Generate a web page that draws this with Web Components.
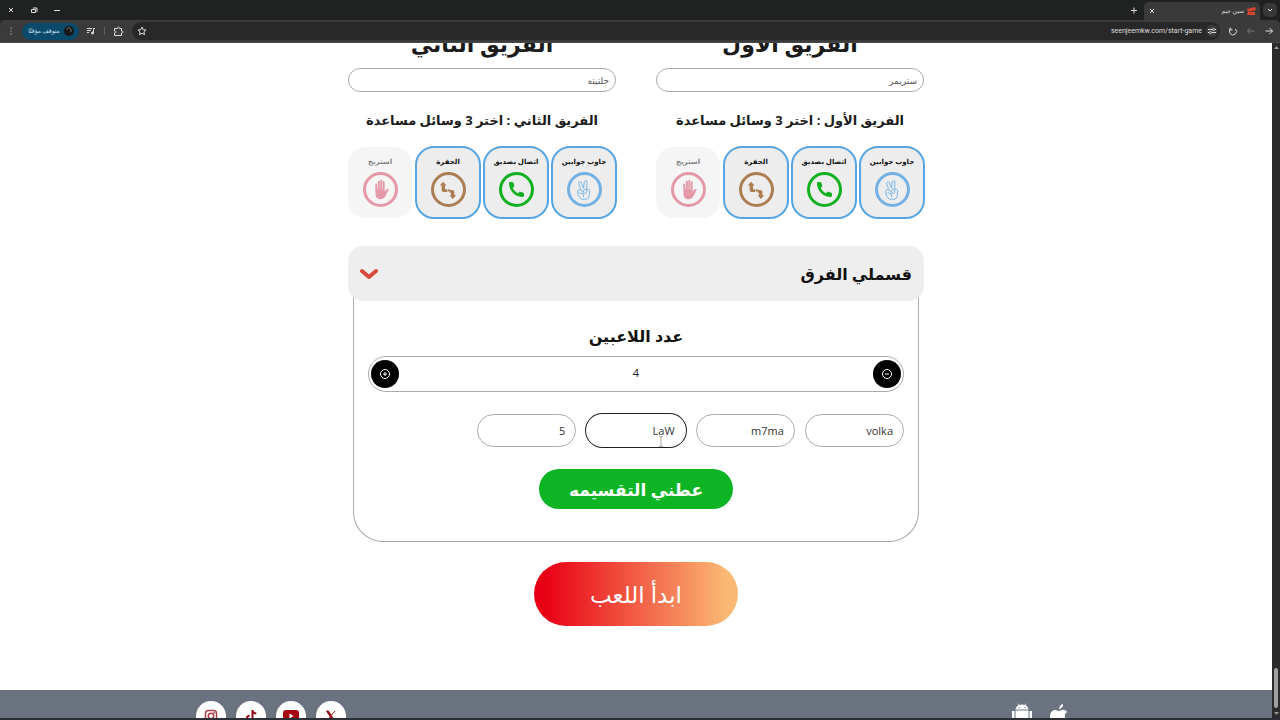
<!DOCTYPE html>
<html lang="ar">
<head>
<meta charset="utf-8">
<meta name="viewport" content="width=device-width, initial-scale=1">
<title>سين جيم</title>
<style>
    body {
        margin: 0;
        height: 100vh;
        overflow: hidden;
        display: flex;
        flex-direction: column;
        background: #fff;
        color: #1b1b1b;
        font-family: "Open Sans", "DejaVu Sans", sans-serif;
    }

    .viewport {
        flex: 1;
        min-height: 0;
        display: flex;
    }

    .page {
        flex: 1;
        overflow: hidden;
    }

    main {
        max-width: 576px;
        height: 665px;
        margin: -18px auto 0;
    }

    .teams {
        display: grid;
        grid-template-columns: 1fr 1fr;
        gap: 40px;
        margin-bottom: 28px;
    }
</style>
</head>
<body>
    <browser-bar></browser-bar>
    <div class="viewport">
        <div class="page" dir="rtl">
            <main>
                <div class="teams">
                    <team-form name="الفريق الأول" value="ستريمر"></team-form>
                    <team-form name="الفريق الثاني" value="حلتيته"></team-form>
                </div>
                <team-splitter heading="قسملي الفرق">
                    <player-count value="4"></player-count>
                    <player-names names="volka,m7ma,LaW,5" active="2"></player-names>
                    <pill-button kind="split">عطني التقسيمه</pill-button>
                </team-splitter>
                <pill-button kind="start">ابدأ اللعب</pill-button>
            </main>
            <site-footer></site-footer>
        </div>
        <scroll-track></scroll-track>
    </div>
    <task-edge></task-edge>
    <text-cursor></text-cursor>

<script>
const reset = `
    * {
        margin: 0;
        padding: 0;
        box-sizing: border-box;
    }

    button, input {
        font: inherit;
        color: inherit;
        border: 0;
        background: none;
    }

    svg {
        display: block;
        flex: none;
    }
`;

const icons = {
    peace: `
        <svg width="22" height="22" viewBox="0 0 24 24" fill="none" stroke="#6fb0e6" stroke-linecap="round" stroke-linejoin="round">
            <path d="M8.5 11.5 6.2 4.8c-.5-1.8 2-2.7 2.8-.9l2.6 6.3.7-7.1c.3-2 3-1.7 3 .2l-.4 8.2"/>
            <path d="M14.9 11.5c1.3-1 3.1-.3 3.2 1.3.3 4-.6 7.7-2.6 9.2H9.2c-2.3-1.7-3.6-4-3.7-6.5"/>
            <path d="M5.5 15.6c-1.6-2.8.5-4.8 2.4-3.7l3.3 1.8c1.4.9.3 2.8-1.2 2.2l-2.3-1M10.5 16.2c1 .3 1.4 1.6 1 3M11.4 13.7c0-2.4 2.8-3.2 3.5-1.4v2.3c-.3 1.4-2.1 1.5-2.8.5"/>
        </svg>`,
    phone: `
        <svg width="19" height="19" viewBox="0 0 24 24" fill="#10b020">
            <path d="M7.2 10.2c1.300 2.800 3.800 5.300 6.600 6.600l1.700-1.700c.4-.4.9-.5 1.400-.3l3.600 1.200c.6.200 1 .7 1 1.300V20c0 .8-.6 1.500-1.500 1.500C10.500 21.500 2.500 13.500 2.500 4c0-.9.7-1.500 1.500-1.500h2.700c.6 0 1.100.4 1.300 1l1.200 3.600c.2.500 0 1-.3 1.400z"/>
        </svg>`,
    swap: `
        <svg width="18" height="18" viewBox="0 0 24 24" fill="#ab7d51">
            <path d="M5.500 1 10 6H8v5h3v3.500H6.500c-2 0-3-1-3-3V6H1z"/>
            <path d="M18.500 24 14 19h2v-3.500h-2V12h3.500c2 0 3 1 3 3v4h2.500z"/>
            <circle cx="13" cy="12.500" r="1.500"/>
        </svg>`,
    hand: `
        <svg width="21" height="21" viewBox="0 0 24 24" fill="#d14460">
            <path d="M6 6c0-1.300 1.900-1.300 2 0l.5 6h.5V3.200c0-1.500 2.200-1.500 2.200 0V12h.6V1.900c0-1.500 2.200-1.500 2.200 0V12h.6V3.700c0-1.500 2.100-1.500 2.100 0v10.800c1-1.700 2.200-3 3.700-3.100 1 0 1.300.8.7 1.500-1.300 1.600-2 4.400-3.500 6.700C16 22 14.400 23 12 23c-4 0-5.500-2.600-5.700-6z"/>
        </svg>`,
    plus: `
        <svg width="12" height="12" viewBox="0 0 12 12" fill="none" stroke="#fff">
            <circle cx="6" cy="6" r="4.500"/><path d="M4 6h4M6 4v4"/>
        </svg>`,
    minus: `
        <svg width="12" height="12" viewBox="0 0 12 12" fill="none" stroke="#fff">
            <circle cx="6" cy="6" r="4.500"/><path d="M4 6h4"/>
        </svg>`
};

class BrowserBar extends HTMLElement {
    constructor() {
        super();
        this.shadowDOM = this.attachShadow({ mode: "open" });
    }

    connectedCallback() {
        this.shadowDOM.innerHTML = `
            <style>
                ${reset}
                :host {
                    display: block;
                    background: #202221;
                    color: #dedede;
                    font-size: 7px;
                    line-height: 12px;
                    border-bottom: 1px solid #4a4a4a;
                }

                svg {
                    fill: none;
                    stroke: currentColor;
                    stroke-width: 1;
                }

                .strip, .tools {
                    display: flex;
                    align-items: center;
                }

                .strip {
                    height: 20px;
                    padding: 0 3px 0 6px;
                }

                .windows {
                    display: flex;
                    gap: 13px;
                    flex: 1;
                }

                .tab {
                    display: flex;
                    align-items: center;
                    width: 116px;
                    height: 18px;
                    margin: 2px 3px 0 5px;
                    padding: 0 4px 0 3px;
                    gap: 3px;
                    border-radius: 5px 5px 0 0;
                    background: #3a3a3a;
                }

                .title {
                    flex: 1;
                    text-align: right;
                    font-size: 6px;
                }

                .more {
                    width: 14px;
                    height: 14px;
                    padding: 2px;
                    border-radius: 5px;
                    background: #383838;
                }

                .tools {
                    height: 22px;
                    padding: 0 6px;
                    gap: 8px;
                    background: #3b3b3b;
                    border-radius: 5px 5px 0 0;
                }

                .profile {
                    display: flex;
                    align-items: center;
                    gap: 3px;
                    height: 17px;
                    width: 57px;
                    padding: 0 5px;
                    margin: 0 -1px 0 -2px;
                    border-radius: 9px;
                    background: #0c4a6b;
                    color: #cfe6f5;
                    font-size: 6px;
                    white-space: nowrap;
                }

                .profile span {
                    flex: 1;
                }

                .sep {
                    width: 1px;
                    height: 8px;
                    background: #606060;
                }

                .address {
                    flex: 1;
                    display: flex;
                    align-items: center;
                    gap: 4px;
                    height: 18px;
                    padding: 0 2px 0 5px;
                    border-radius: 9px;
                    background: #282828;
                }

                .address input {
                    flex: 1;
                    min-width: 0;
                    text-align: right;
                    font-family: Roboto, sans-serif;
                }

                .site {
                    padding: 1px;
                    width: 12px;
                    height: 12px;
                    border-radius: 6px;
                    background: #3d3d3d;
                }

                .dim {
                    color: #777;
                }
            </style>
            <div class="strip">
                <div class="windows">
                    <button aria-label="إغلاق"><svg width="10" height="10"><path d="M3 3l4 4M7 3l-4 4"/></svg></button>
                    <button aria-label="استعادة"><svg width="10" height="10"><path d="M2.500 4.500h4v3h-4zM4 3h4v4"/></svg></button>
                    <button aria-label="تصغير"><svg width="10" height="10"><path d="M2 5.500h6"/></svg></button>
                </div>
                <button aria-label="علامة جديدة"><svg width="10" height="10"><path d="M2 5.500h6M5 2.500v6"/></svg></button>
                <div class="tab">
                    <button aria-label="إغلاق العلامة"><svg width="10" height="10"><path d="M3 3l4 4M7 3l-4 4"/></svg></button>
                    <span class="title">سين جيم</span>
                    <svg width="9" height="8"><path d="M0 2l8-2 1 3-8 2zM1 5h7v3H0z" fill="#d8432f" stroke="none"/></svg>
                </div>
                <button class="more" aria-label="المزيد"><svg width="10" height="10"><path d="M3 4l2 2 2-2"/></svg></button>
            </div>
            <div class="tools">
                <button aria-label="القائمة"><svg width="10" height="10"><path d="M5 1.500v7" stroke-dasharray="1 2"/></svg></button>
                <button class="profile"><span>متوقف مؤقتًا</span><svg width="10" height="12"><circle cx="5" cy="6" r="5" fill="#171717" stroke="none"/><path d="M3 5c0-3 4-3 4 0v2" stroke="#777"/></svg></button>
                <svg width="10" height="10"><path d="M1 2.500h5M1 4.500h4M1 6.500h2M7.500 7V2.500H9"/><circle cx="6.500" cy="7" r="1" fill="currentColor"/></svg>
                <i class="sep"></i>
                <svg width="11" height="11"><path d="M1.500 2.500h3c0-2 2-2 2 0h2v2.500c2 0 2 2 0 2v2.500h-7V7c2 0 2-2 0-2z"/></svg>
                <div class="address">
                    <svg width="10" height="10"><path d="M5 1l1.200 2.700 2.800.3-2.100 1.900.6 2.800L5 7.300 2.500 8.700l.6-2.800L1 4l2.800-.3z"/></svg>
                    <input dir="ltr" aria-label="العنوان" value="seenjeemkw.com/start-game">
                    <span class="site"><svg width="10" height="10"><path d="M1 3.500h4M8 3.500h1M1 6.500h1M5 6.500h4"/><circle cx="6.500" cy="3.500" r="1"/><circle cx="3.500" cy="6.500" r="1"/></svg></span>
                </div>
                <svg width="10" height="10"><path d="M3 2.500A3.500 3.500 0 1 0 7.500 3M2 1.500v2.500h2.500"/></svg>
                <svg class="dim" width="10" height="10"><path d="M8.500 5h-7M4.500 2l-3 3 3 3"/></svg>
                <svg width="10" height="10"><path d="M1.500 5h7M5.500 2l3 3-3 3"/></svg>
            </div>`;
    }
}

class HelperCard extends HTMLElement {
    constructor() {
        super();
        this.shadowDOM = this.attachShadow({ mode: "open" });
    }

    connectedCallback() {
        const picked = this.hasAttribute("picked");
        this.shadowDOM.innerHTML = `
            <style>
                ${reset}
                :host {
                    display: block;
                }

                button {
                    display: flex;
                    flex-direction: column;
                    align-items: center;
                    gap: 3px;
                    width: 100%;
                    height: 71px;
                    padding-top: 8px;
                    border-radius: 18px;
                    background: #ededed;
                    color: #111;
                    font-size: 7px;
                    font-weight: bold;
                    line-height: 14px;
                    white-space: nowrap;
                    opacity: .55;
                }

                button[aria-pressed="true"] {
                    opacity: 1;
                    outline: 2px solid #56a5e4;
                    outline-offset: -1px;
                }

                .ring {
                    display: flex;
                    align-items: center;
                    justify-content: center;
                    width: 35px;
                    height: 35px;
                    border: 3px solid ${this.getAttribute("tint")};
                    border-radius: 50%;
                }
            </style>
            <button aria-pressed="${picked}">
                <slot></slot>
                <span class="ring">${icons[this.getAttribute("icon")]}</span>
            </button>`;
    }
}

class TeamForm extends HTMLElement {
    constructor() {
        super();
        this.shadowDOM = this.attachShadow({ mode: "open" });
    }

    connectedCallback() {
        const name = this.getAttribute("name");
        this.shadowDOM.innerHTML = `
            <style>
                ${reset}
                :host {
                    display: block;
                    text-align: center;
                }

                .name {
                    display: block;
                    font-size: 22px;
                    font-weight: bold;
                    line-height: 36px;
                    margin-bottom: 7px;
                }

                input {
                    display: block;
                    width: 100%;
                    height: 24px;
                    padding: 0 6px;
                    border: 1px solid #aaa;
                    border-radius: 12px;
                    color: #555;
                    font-size: 9px;
                }

                h3 {
                    font-size: 13px;
                    line-height: 24px;
                    margin: 16px 0 15px;
                    white-space: nowrap;
                }

                .helpers {
                    display: grid;
                    grid-template-columns: repeat(4, 1fr);
                    gap: 4px;
                }
            </style>
            <label class="name" for="team">${name}</label>
            <input id="team" value="${this.getAttribute("value")}">
            <h3>${name} : اختر 3 وسائل مساعدة</h3>
            <div class="helpers">
                <helper-card icon="peace" tint="#73b1e5" picked>جاوب جوابين</helper-card>
                <helper-card icon="phone" tint="#10b020" picked>اتصال بصديق</helper-card>
                <helper-card icon="swap" tint="#ab7d51" picked>الحفرة</helper-card>
                <helper-card icon="hand" tint="#d14460">استريح</helper-card>
            </div>`;
    }
}

class TeamSplitter extends HTMLElement {
    constructor() {
        super();
        this.shadowDOM = this.attachShadow({ mode: "open" });
    }

    connectedCallback() {
        this.shadowDOM.innerHTML = `
            <style>
                ${reset}
                :host {
                    display: block;
                    margin-bottom: 20px;
                }

                .toggle {
                    position: relative;
                    display: flex;
                    align-items: center;
                    justify-content: space-between;
                    width: 100%;
                    height: 55px;
                    padding: 0 12px;
                    border-radius: 15px;
                    background: #eee;
                    color: #111;
                    font-size: 16px;
                    font-weight: bold;
                }

                .body {
                    margin: -5px 5px 0;
                    padding: 24px 14px 32px;
                    border: 1px solid #aaa;
                    border-top: 0;
                    border-radius: 0 0 30px 30px;
                }
            </style>
            <button class="toggle" aria-expanded="true">
                <span>${this.getAttribute("heading")}</span>
                <svg width="18" height="12" viewBox="0 0 18 12" fill="none" stroke="#d84a3b" stroke-width="4" stroke-linecap="round" stroke-linejoin="round"><path d="M2 3l7 6 7-6"/></svg>
            </button>
            <div class="body"><slot></slot></div>`;
    }
}

class PlayerCount extends HTMLElement {
    constructor() {
        super();
        this.shadowDOM = this.attachShadow({ mode: "open" });
    }

    connectedCallback() {
        this.shadowDOM.innerHTML = `
            <style>
                ${reset}
                :host {
                    display: block;
                }

                label {
                    display: block;
                    margin-bottom: 4px;
                    color: #111;
                    font-size: 16px;
                    font-weight: bold;
                    line-height: 32px;
                    text-align: center;
                }

                .stepper {
                    display: flex;
                    align-items: center;
                    height: 36px;
                    padding: 0 2px;
                    border: 1px solid #aaa;
                    border-radius: 18px;
                }

                button {
                    display: flex;
                    align-items: center;
                    justify-content: center;
                    width: 28px;
                    height: 28px;
                    border-radius: 50%;
                    background: #000;
                }

                input {
                    flex: 1;
                    min-width: 0;
                    padding-bottom: 4px;
                    font-size: 11px;
                    text-align: center;
                }
            </style>
            <label for="count">عدد اللاعبين</label>
            <div class="stepper">
                <button aria-label="إنقاص">${icons.minus}</button>
                <input id="count" inputmode="numeric" value="${this.getAttribute("value")}">
                <button aria-label="زيادة">${icons.plus}</button>
            </div>`;
    }
}

class PlayerNames extends HTMLElement {
    constructor() {
        super();
        this.shadowDOM = this.attachShadow({ mode: "open" });
    }

    connectedCallback() {
        const active = Number(this.getAttribute("active"));
        const fields = this.getAttribute("names").split(",").map((name, i) =>
            `<input class="${i === active ? "active" : ""}" aria-label="لاعب ${i + 1}" value="${name}">`
        ).join("");
        this.shadowDOM.innerHTML = `
            <style>
                ${reset}
                :host {
                    display: grid;
                    grid-template-columns: repeat(5, 1fr);
                    gap: 10px;
                    margin: 22px 0;
                }

                input {
                    min-width: 0;
                    height: 33px;
                    padding: 0 10px;
                    border: 1px solid #aaa;
                    border-radius: 17px;
                    color: #333;
                    font-size: 11px;
                }

                .active {
                    border-color: transparent;
                    box-shadow: 0 0 0 1px #222;
                }
            </style>
            ${fields}`;
    }
}

class PillButton extends HTMLElement {
    constructor() {
        super();
        this.shadowDOM = this.attachShadow({ mode: "open" });
    }

    connectedCallback() {
        this.shadowDOM.innerHTML = `
            <style>
                ${reset}
                :host {
                    display: flex;
                    justify-content: center;
                }

                button {
                    color: #fff;
                    border-radius: 32px;
                    white-space: nowrap;
                }

                :host([kind="split"]) button {
                    width: 194px;
                    height: 40px;
                    background: #0db424;
                    font-size: 17px;
                    font-weight: bold;
                }

                :host([kind="start"]) button {
                    width: 204px;
                    height: 64px;
                    background: linear-gradient(to right, #e90015 5%, #fab974 95%);
                    font-size: 23px;
                }
            </style>
            <button><slot></slot></button>`;
    }
}

class SiteFooter extends HTMLElement {
    constructor() {
        super();
        this.shadowDOM = this.attachShadow({ mode: "open" });
    }

    connectedCallback() {
        this.shadowDOM.innerHTML = `
            <style>
                ${reset}
                :host {
                    display: block;
                    padding: 11px 16px;
                    background: #6b7280;
                }

                .inner, nav {
                    display: flex;
                }

                .inner {
                    max-width: 880px;
                    margin: 0 auto;
                    justify-content: space-between;
                }

                nav {
                    gap: 10px;
                }

                .apps {
                    gap: 16px;
                    padding: 2px 7px;
                }

                .social a {
                    display: flex;
                    align-items: center;
                    justify-content: center;
                    width: 30px;
                    height: 30px;
                    border-radius: 50%;
                    background: #fff;
                }
            </style>
            <div class="inner">
                <nav class="apps">
                    <a href="#" aria-label="App Store"><svg width="20" height="24" viewBox="0 0 20 24" fill="#fff"><path d="M14 1c.2 3-2 5-4 5 0-2.500 2-4.600 4-5zM10 8c1 0 2.200-1.200 4.200-1.200 1.600 0 3.100.9 3.900 2.200-3.500 2-2.900 7 .7 8.300C17.600 20.500 16 23 14 23c-1.500 0-2-1-3.800-1S8 23 6.500 23C3.500 23 1 17.500 1 13.500S3.500 7 6 7c1.700 0 3 1 4 1z"/></svg></a>
                    <a href="#" aria-label="Google Play"><svg width="22" height="24" viewBox="0 0 22 24" fill="#fff"><path d="M4.500 7.500h13V18a1 1 0 0 1-1 1H15v4h-3v-4h-2v4H7v-4H5.500a1 1 0 0 1-1-1zM1 8h2.500v9H1zM18.500 8H21v9h-2.500zM4.500 6.500C4.700 4.300 6 3 7.500 2.300L6.500.8l.6-.4 1.100 1.700a8 8 0 0 1 5.600 0L14.900.4l.6.4-1 1.500c1.500.7 2.800 2 3 4.200z"/><circle cx="8" cy="4.500" r=".6" fill="#6b7280"/><circle cx="14" cy="4.500" r=".6" fill="#6b7280"/></svg></a>
                </nav>
                <nav class="social">
                    <a href="#" aria-label="X"><svg width="14" height="14" viewBox="0 0 14 14" stroke="#9c1119"><path d="M2.500 2h2L11 12H9z" fill="#9c1119"/><path d="M11 2 7.500 6M6 8l-3.500 4"/></svg></a>
                    <a href="#" aria-label="YouTube"><svg width="16" height="12" viewBox="0 0 16 12"><rect width="16" height="12" rx="3" fill="#a50713"/><path d="M6.500 3.500v5l4-2.500z" fill="#fff"/></svg></a>
                    <a href="#" aria-label="TikTok"><svg width="14" height="14" viewBox="0 0 14 14" fill="none" stroke="#8f1018" stroke-width="2"><path d="M8.500 1v8.500a2.800 2.800 0 1 1-2.800-2.800M8.500 1c.2 2.200 1.600 3.500 3.800 3.600"/></svg></a>
                    <a href="#" aria-label="Instagram"><svg width="14" height="14" viewBox="0 0 14 14" fill="none" stroke="#a8404b" stroke-width="1.500"><rect x="1.500" y="1.500" width="11" height="11" rx="3"/><circle cx="7" cy="7" r="2.700"/><circle cx="10.200" cy="3.800" r=".3"/></svg></a>
                </nav>
            </div>`;
    }
}

class ScrollTrack extends HTMLElement {
    constructor() {
        super();
        this.shadowDOM = this.attachShadow({ mode: "open" });
    }

    connectedCallback() {
        this.shadowDOM.innerHTML = `
            <style>
                ${reset}
                :host {
                    display: flex;
                    flex-direction: column;
                    align-items: center;
                    gap: 4px;
                    width: 8px;
                    padding: 3px 0;
                    background: #2b2b2b;
                }

                .space {
                    flex: 1;
                }

                .thumb {
                    width: 4px;
                    height: 40px;
                    border-radius: 2px;
                    background: #9f9f9f;
                }
            </style>
            <svg width="5" height="3"><path d="M0 3h5L2.500 0z" fill="#999"/></svg>
            <div class="space"></div>
            <div class="thumb"></div>
            <svg width="5" height="3"><path d="M0 0h5L2.500 3z" fill="#999"/></svg>`;
    }
}

class TaskEdge extends HTMLElement {
    constructor() {
        super();
        this.shadowDOM = this.attachShadow({ mode: "open" });
    }

    connectedCallback() {
        this.shadowDOM.innerHTML = `
            <style>
                :host {
                    display: block;
                    height: 2px;
                    background: #2c2f36;
                }
            </style>`;
    }
}

class TextCursor extends HTMLElement {
    constructor() {
        super();
        this.shadowDOM = this.attachShadow({ mode: "open" });
    }

    connectedCallback() {
        this.shadowDOM.innerHTML = `
            <style>
                :host {
                    position: absolute;
                    left: 658px;
                    top: 436px;
                    pointer-events: none;
                }

                svg {
                    display: block;
                }
            </style>
            <svg width="6" height="11" fill="none" stroke="#aaa"><path d="M1 .5h1.500l.5 1 .5-1H5M3 1v9M1 10.500h1.500l.5-1 .5 1H5"/></svg>`;
    }
}

customElements.define("browser-bar", BrowserBar);
customElements.define("helper-card", HelperCard);
customElements.define("team-form", TeamForm);
customElements.define("team-splitter", TeamSplitter);
customElements.define("player-count", PlayerCount);
customElements.define("player-names", PlayerNames);
customElements.define("pill-button", PillButton);
customElements.define("site-footer", SiteFooter);
customElements.define("scroll-track", ScrollTrack);
customElements.define("task-edge", TaskEdge);
customElements.define("text-cursor", TextCursor);
</script>
</body>
</html>
